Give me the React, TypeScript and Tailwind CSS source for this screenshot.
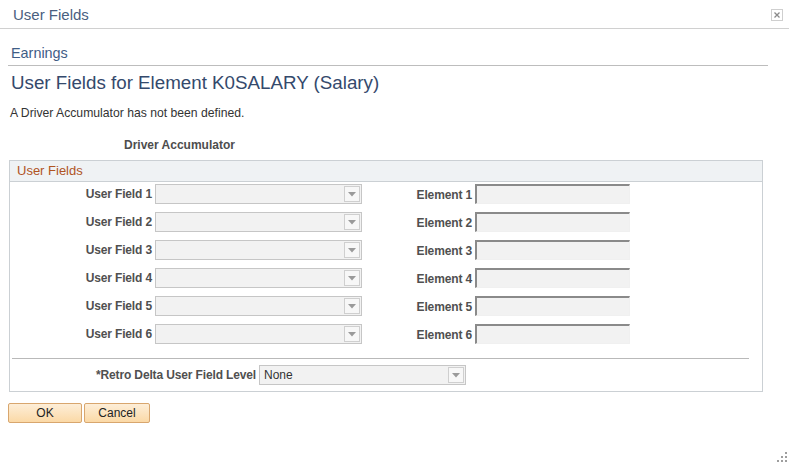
import React from 'react';

const font = { fontFamily: '"Liberation Sans", Arial, sans-serif' };

const SelectBox: React.FC<{ width: string; value?: string }> = ({ width, value }) => (
  <div className={`relative h-[20px] ${width} border border-[#c6c6c6] bg-[#f2f2f2] flex items-center`}>
    <span className="pl-[4px] text-[12px] text-[#333]">{value}</span>
    <div className="absolute right-[1px] top-[1px] bottom-[1px] w-[16px] border border-[#cfcfcf] bg-[#f7f7f7] flex items-center justify-center">
      <svg width="8" height="5" viewBox="0 0 8 5">
        <path d="M0 0 H8 L4 4.5 Z" fill="#9a9a9a" />
      </svg>
    </div>
  </div>
);

const ElementInput: React.FC = () => (
  <div className="h-[20px] w-[155px] bg-[#f2f2f2] border-t-2 border-l-2 border-t-[#8a8a8a] border-l-[#8a8a8a] border-r border-b border-r-[#f0f0f0] border-b-[#f0f0f0]" />
);

export default function App() {
  const rows = [1, 2, 3, 4, 5, 6];
  return (
    <div className="relative w-[789px] h-[465px] bg-white overflow-hidden" style={font}>
      {/* Title bar */}
      <div className="h-[29px] border-b border-[#d0d0d0] flex items-center justify-between pl-[13px] pr-[6px] pt-[3px]">
        <span className="text-[15px] text-[#4a5e80]">User Fields</span>
        <div className="w-[12px] h-[12px] border border-[#cfcfcf] flex items-center justify-center mb-[2px]">
          <svg width="6" height="6" viewBox="0 0 6 6">
            <path d="M0.5 0.5 L5.5 5.5 M5.5 0.5 L0.5 5.5" stroke="#8a8a8a" strokeWidth="1.3" />
          </svg>
        </div>
      </div>

      <div className="pl-[8px]">
        <div className="mt-[15px] h-[22px] w-[760px] border-b border-[#bdbdbd] pl-[3px] text-[14.4px] leading-[18px] text-[#3f5d86]">
          Earnings
        </div>
        <div className="mt-[6px] h-[22px] pl-[3px] text-[18.75px] leading-[22px] text-[#34496c]">
          User Fields for Element K0SALARY (Salary)
        </div>
        <div className="mt-[12px] pl-[2px] text-[12.2px] leading-[14px] text-[#333]">
          A Driver Accumulator has not been defined.
        </div>
        <div className="mt-[18px] pl-[116px] text-[12px] leading-[14px] font-bold text-[#4d4d4d]">
          Driver Accumulator
        </div>

        {/* Group box */}
        <div className="mt-[8px] ml-[1px] w-[754px] border border-[#cbd0d4]">
          <div className="h-[21px] bg-[#eff2f4] border-b border-[#cbd0d4] pl-[7px] flex items-center text-[13px] text-[#b0541f]">
            User Fields
          </div>
          <div className="pt-[2px] flex flex-col gap-[8px]">
            {rows.map((n) => (
              <div key={n} className="flex items-center h-[20px]">
                <div className="w-[142px] text-right text-[12px] font-bold tracking-[-0.14px] text-[#505050]">User Field {n}</div>
                <div className="ml-[3px]">
                  <SelectBox width="w-[207px]" />
                </div>
                <div className="w-[110px] text-right text-[12px] font-bold tracking-[-0.14px] text-[#505050] pt-[2px]">Element {n}</div>
                <div className="ml-[3px] self-start">
                  <ElementInput />
                </div>
              </div>
            ))}
          </div>
          <div className="mt-[14px] ml-[2px] w-[737px] border-t border-[#b9b9b9]" />
          <div className="mt-[6px] mb-[6px] flex items-center h-[20px]">
            <div className="w-[246px] text-right text-[12px] font-bold tracking-[-0.14px] text-[#505050]">*Retro Delta User Field Level</div>
            <div className="ml-[3px]">
              <SelectBox width="w-[207px]" value="None" />
            </div>
          </div>
        </div>

        {/* Buttons */}
        <div className="mt-[11px] flex gap-[2px]">
          <button className="w-[74px] h-[20px] rounded-[2px] border border-[#d8a66e] bg-gradient-to-b from-[#fdeed8] to-[#fbd9a6] text-[12px] text-[#222] leading-none">
            OK
          </button>
          <button className="w-[66px] h-[20px] rounded-[2px] border border-[#d8a66e] bg-gradient-to-b from-[#fdeed8] to-[#fbd9a6] text-[12px] text-[#222] leading-none">
            Cancel
          </button>
        </div>
      </div>

      {/* Resize grip */}
      <svg className="absolute right-[2px] bottom-[3px]" width="10" height="10" viewBox="0 0 10 10">
        <rect x="8" y="0" width="2" height="2" fill="#9e9e9e" />
        <rect x="4" y="4" width="2" height="2" fill="#9e9e9e" />
        <rect x="8" y="4" width="2" height="2" fill="#9e9e9e" />
        <rect x="0" y="8" width="2" height="2" fill="#9e9e9e" />
        <rect x="4" y="8" width="2" height="2" fill="#9e9e9e" />
        <rect x="8" y="8" width="2" height="2" fill="#9e9e9e" />
      </svg>
    </div>
  );
}
